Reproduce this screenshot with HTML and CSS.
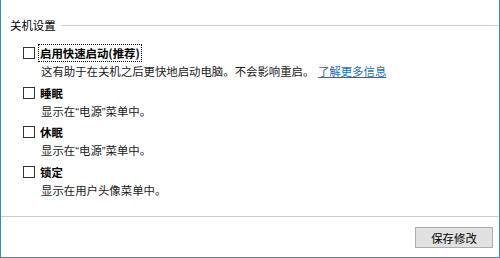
FILE: index.html
```html
<!DOCTYPE html>
<html lang="zh-CN">
<head>
    <meta charset="UTF-8">
    <title>关机设置</title>
    <link rel="stylesheet" href="styles.css">
</head>
<body>
    <div class="window">
        <div class="content">
            <div class="group-title">
                <span>关机设置</span>
                <div class="rule"></div>
            </div>

            <div class="options">
                <div class="option">
                    <label class="check-row">
                        <span class="box"></span>
                        <span class="label focus">启用快速启动(推荐)</span>
                    </label>
                    <div class="desc">这有助于在关机之后更快地启动电脑。不会影响重启。 <a href="#">了解更多信息</a></div>
                </div>
                <div class="option">
                    <label class="check-row">
                        <span class="box"></span>
                        <span class="label">睡眠</span>
                    </label>
                    <div class="desc">显示在<span class="q">“</span>电源<span class="q">”</span>菜单中。</div>
                </div>
                <div class="option">
                    <label class="check-row">
                        <span class="box"></span>
                        <span class="label">休眠</span>
                    </label>
                    <div class="desc">显示在<span class="q">“</span>电源<span class="q">”</span>菜单中。</div>
                </div>
                <div class="option">
                    <label class="check-row">
                        <span class="box"></span>
                        <span class="label">锁定</span>
                    </label>
                    <div class="desc">显示在用户头像菜单中。</div>
                </div>
            </div>
        </div>

        <div class="footer">
            <button class="btn-guardar">保存修改</button>
        </div>
    </div>
</body>
</html>
```

FILE: styles.css
```css
html, body {
    margin: 0;
    padding: 0;
    background-color: #ffffff;
}

body {
    font-family: "Noto Sans CJK SC", "Noto Sans", sans-serif;
    font-size: 11.4px;
    color: #000000;
}

.window {
    width: 500px;
    height: 258px;
    box-sizing: border-box;
    border-left: 1px solid #3a8bbd;
    border-right: 1px solid #3a8bbd;
    border-bottom: 1px solid #3a8bbd;
    display: flex;
    flex-direction: column;
}

.content {
    flex: 1;
}

.group-title {
    display: flex;
    align-items: center;
    margin-top: 16px;
    padding-left: 9px;
    height: 18px;
    line-height: 18px;
}

.rule {
    flex: 1;
    height: 1px;
    background-color: #d0d0d0;
    margin-left: 5px;
}

.options {
    padding-left: 22px;
    margin-top: 10px;
}

.option {
    margin-bottom: 3.5px;
}

.check-row {
    display: flex;
    align-items: center;
    height: 18px;
}

.box {
    width: 10px;
    height: 10px;
    border: 1px solid #333333;
    background-color: #ffffff;
}

.label {
    margin-left: 3px;
    padding: 0 1px;
    font-weight: bold;
    line-height: 16px;
    border: 1px dotted transparent;
}

.label.focus {
    border-color: #000000;
}

.desc {
    padding-left: 18px;
    height: 18px;
    line-height: 18px;
    color: #1a1a1a;
}

/* comillas estrechas como en la captura */
.q {
    font-family: "Liberation Sans", sans-serif;
}

.desc a {
    color: #1e6fc2;
    text-decoration: underline;
    margin-left: 1px;
}

.footer {
    border-top: 1px solid #cccccc;
    display: flex;
    justify-content: flex-end;
    padding: 10px 6px 0 0;
    height: 30px;
}

.btn-guardar {
    width: 78px;
    height: 21px;
    background-color: #e1e1e1;
    border: 1px solid #adadad;
    font-family: inherit;
    font-size: 11.4px;
    color: #000000;
    padding: 0;
}
```
